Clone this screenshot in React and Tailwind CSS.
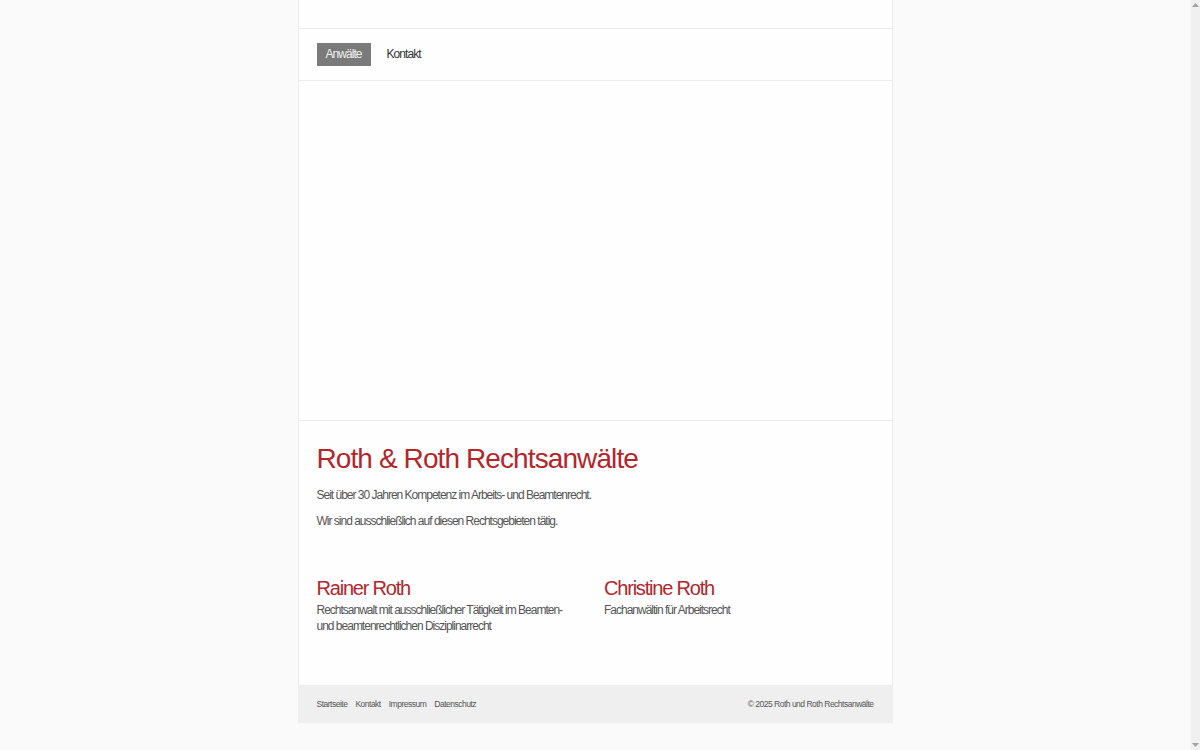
const sans = { fontFamily: '"Liberation Sans", Arial, sans-serif' };

const lawyers = [
  {
    name: 'Rainer Roth',
    text: 'Rechtsanwalt mit ausschließlicher Tätigkeit im Beamten- und beamtenrechtlichen Disziplinarrecht',
  },
  { name: 'Christine Roth', text: 'Fachanwältin für Arbeitsrecht' },
];

const footerLinks = ['Startseite', 'Kontakt', 'Impressum', 'Datenschutz'];

function Arrow({ up }) {
  return (
    <svg width="7" height="4" viewBox="0 0 7 4" className="mx-auto">
      <path d={up ? 'M0 4 L3.5 0 L7 4 Z' : 'M0 0 L3.5 4 L7 0 Z'} fill="#a3a3a3" />
    </svg>
  );
}

export default function App() {
  return (
    <div className="flex h-[750px] overflow-hidden bg-[#fafafa] text-[#555]" style={sans}>
      <div className="flex-1">
        <div className="mx-auto w-[595px] border-x border-[#ececec] bg-[#fefefe]">
          {/* top bar */}
          <div className="h-[29px] border-b border-[#ececec]" />

          {/* navigation */}
          <nav className="flex h-[52px] items-center gap-[16px] border-b border-[#ececec] px-[18px]">
            <a className="bg-[#7a7a7a] px-[9px] py-[4px] text-[12px] leading-[15px] tracking-[-0.95px] text-[#f0f0f0]">
              Anwälte
            </a>
            <a className="text-[12px] leading-[15px] tracking-[-0.95px] text-[#333]">Kontakt</a>
          </nav>

          {/* header image area */}
          <div className="h-[340px] border-b border-[#ececec]" />

          <main className="px-[18px] pb-[51px] pt-[20px]">
            <h1 className="text-[28px] leading-[36px] tracking-[-0.9px] text-[#b3262c]">
              Roth &amp; Roth Rechtsanwälte
            </h1>
            <p className="mt-[10px] text-[12px] leading-[16px] tracking-[-1px]">
              Seit über 30 Jahren Kompetenz im Arbeits- und Beamtenrecht.
            </p>
            <p className="mt-[10px] text-[12px] leading-[16px] tracking-[-1px]">
              Wir sind ausschließlich auf diesen Rechtsgebieten tätig.
            </p>

            <div className="mt-[46px] grid grid-cols-2 gap-[18px]">
              {lawyers.map((l) => (
                <div key={l.name}>
                  <h2 className="text-[20px] leading-[26px] tracking-[-1.2px] text-[#b3262c]">{l.name}</h2>
                  <p className="mt-[1px] pr-[14px] text-[12px] leading-[16px] tracking-[-1px]">{l.text}</p>
                </div>
              ))}
            </div>
          </main>
        </div>

        <footer className="mx-auto flex h-[38px] w-[595px] items-center justify-between bg-[#efefef] px-[19px] text-[8.5px] tracking-[-0.5px] text-[#555]">
          <div className="flex gap-[8px]">
            {footerLinks.map((f) => (
              <a key={f}>{f}</a>
            ))}
          </div>
          <span>© 2025 Roth und Roth Rechtsanwälte</span>
        </footer>
      </div>

      {/* scrollbar */}
      <div className="flex w-[10px] flex-col justify-between border-l border-[#f6f6f6] bg-[#f0f0f0] py-[3px]">
        <Arrow up />
        <Arrow />
      </div>
    </div>
  );
}
